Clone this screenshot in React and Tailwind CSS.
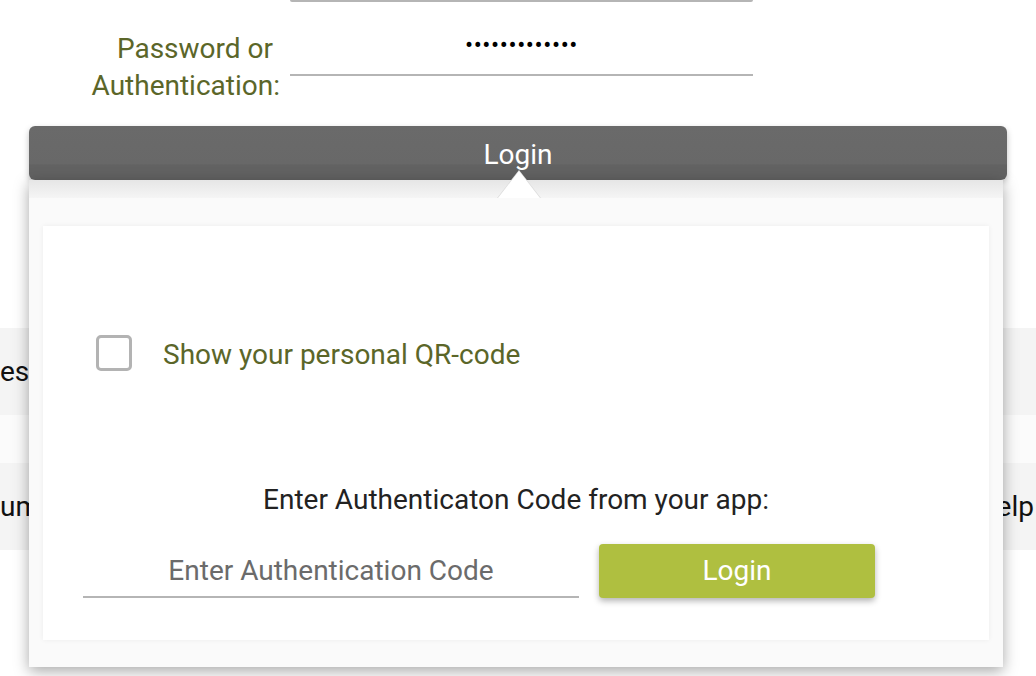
import { useState } from "react";

const Checkbox = ({ checked, onChange }) => (
  <button
    onClick={() => onChange(!checked)}
    className="h-[36px] w-[36px] shrink-0 rounded-[5px] border-[3px] border-[#b3b3b3] bg-white"
  />
);

const App = () => {
  const [showQr, setShowQr] = useState(false);
  const [code, setCode] = useState("");

  return (
    <div className="relative h-[676px] w-[1036px] overflow-hidden bg-white font-['Roboto',sans-serif]">
      {/* form behind the popup */}
      <div className="flex flex-col">
        <div className="ml-[290px] mt-[-2px] h-[4px] w-[463px] rounded-b-[2px] bg-[#b5b5b5]" />

        <div className="mt-[28px] flex items-start">
          <label className="w-[280px] text-right text-[28px] leading-[37px] text-[#5b6629]">
            <span className="mr-[7px]">Password or</span>
            <br />
            Authentication:
          </label>
          <div className="ml-[10px] flex h-[46px] w-[463px] items-start justify-center border-b-[2px] border-[#b5b5b5]">
            <span className="mt-[2px] text-[24px] leading-[26px] tracking-[0.6px] text-black">•••••••••••••</span>
          </div>
        </div>

        <div className="mx-[29px] mt-[22px] flex h-[54px] items-center justify-center rounded-[6px] bg-[linear-gradient(#6a6a6a_0%,#686868_70%,#626262_72%,#626262_100%)] shadow-[0_3px_6px_rgba(0,0,0,0.25)]">
          <span className="pt-[3px] text-[28px] text-white">Login</span>
        </div>

        {/* list rows */}
        <div className="mt-[148px] flex h-[87px] items-center justify-between bg-[#f4f4f4] text-[28px] text-[#111]">
          <span>es</span>
        </div>
        <div className="h-[48px] bg-[#fbfbfb]" />
        <div className="flex h-[87px] items-center justify-between bg-[#f4f4f4] text-[28px] text-[#111]">
          <span>um</span>
          <span className="mr-[2px]">elp</span>
        </div>
      </div>

      {/* popup */}
      <div className="absolute left-[29px] top-[180px] flex h-[487px] w-[974px] flex-col bg-[#fafafa] shadow-[0_4px_14px_rgba(0,0,0,0.35)]">
        <div className="h-[18px] bg-[linear-gradient(#e6e6e6,#f5f5f5)]" />
        <div className="absolute left-[468px] top-[-10px] h-0 w-0 border-x-[22px] border-b-[28px] border-x-transparent border-b-[#dcdcdc]" />
        <div className="absolute left-[469px] top-[-9px] h-0 w-0 border-x-[21px] border-b-[27px] border-x-transparent border-b-white" />

        <div className="mx-[14px] mt-[28px] flex h-[414px] flex-col bg-white shadow-[0_0_5px_rgba(0,0,0,0.06)]">
          <div className="ml-[53px] mt-[103px] flex items-center gap-[31px]">
            <Checkbox checked={showQr} onChange={setShowQr} />
            <span className="pt-[5px] text-[28px] leading-[42px] text-[#5b6629]">Show your personal QR-code</span>
          </div>

          <p className="mt-[103px] text-center text-[28px] leading-[42px] text-[#222]">Enter Authenticaton Code from your app:</p>

          <div className="ml-[40px] mt-[23px] flex items-center gap-[20px]">
            <input
              value={code}
              onChange={(e) => setCode(e.target.value)}
              placeholder="Enter Authentication Code"
              className="h-[54px] w-[496px] border-b-[2px] border-[#b5b5b5] bg-transparent text-center text-[28px] text-[#333] placeholder:text-[#6b6b6b] focus:outline-none"
            />
            <button className="h-[54px] w-[276px] rounded-[4px] bg-[#afbf40] text-[28px] text-white shadow-[0_3px_6px_rgba(0,0,0,0.3)]">
              Login
            </button>
          </div>
        </div>
      </div>
    </div>
  );
};

export default App;
